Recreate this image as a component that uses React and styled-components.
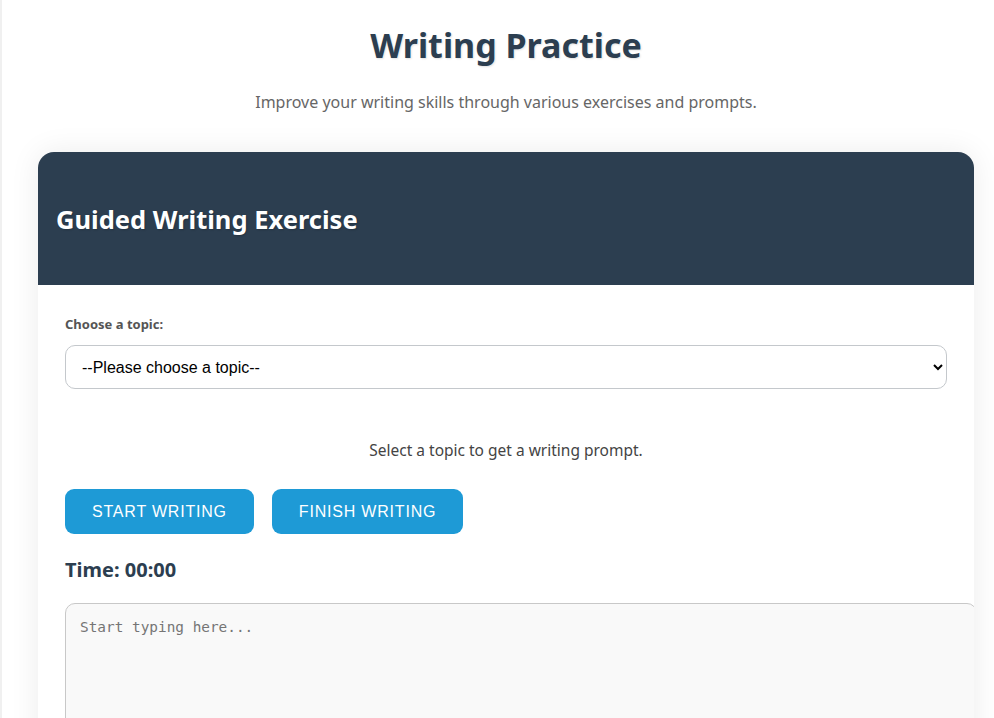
import React, { useState } from "react";
import styled, { createGlobalStyle } from "styled-components";

const GlobalStyle = createGlobalStyle`
  html, body {
    margin: 0;
    padding: 0;
    background: #ffffff;
  }
  body {
    font-family: "Segoe UI", "Noto Sans", sans-serif;
    color: #333333;
  }
  * {
    box-sizing: border-box;
  }
`;

const topics = ["Travel", "Technology", "Family", "Environment", "Education"];

const App = () => {
  const [topic, setTopic] = useState("");
  const [text, setText] = useState("");

  return (
    <Page>
      <GlobalStyle />
      <Title>Writing Practice</Title>
      <Subtitle>Improve your writing skills through various exercises and prompts.</Subtitle>

      <Card>
        <CardHeader>
          <h2>Guided Writing Exercise</h2>
        </CardHeader>
        <CardBody>
          <Label htmlFor="topic">Choose a topic:</Label>
          <Select id="topic" value={topic} onChange={(e) => setTopic(e.target.value)}>
            <option value="">--Please choose a topic--</option>
            {topics.map((t) => (
              <option key={t} value={t}>{t}</option>
            ))}
          </Select>

          <Prompt>
            {topic ? `Write about ${topic.toLowerCase()}.` : "Select a topic to get a writing prompt."}
          </Prompt>

          <ButtonRow>
            <ActionButton>Start Writing</ActionButton>
            <ActionButton>Finish Writing</ActionButton>
          </ButtonRow>

          <Timer>Time: 00:00</Timer>

          <TextArea
            placeholder="Start typing here..."
            value={text}
            onChange={(e) => setText(e.target.value)}
          />
        </CardBody>
      </Card>
    </Page>
  );
};

export default App;

const Page = styled.div`
  min-height: 718px;
  border-left: 2px solid #f0f0f0;
  padding: 0 20px 40px 36px;
`;

const Title = styled.h1`
  margin: 0;
  padding-top: 22px;
  text-align: center;
  font-size: 34px;
  line-height: 46px;
  font-weight: 700;
  color: #2c3e50;
  text-shadow: 1px 1px 2px rgba(0, 0, 0, 0.12);
`;

const Subtitle = styled.p`
  margin: 23px 0 0;
  text-align: center;
  font-size: 16px;
  line-height: 22px;
  color: #666666;
`;

const Card = styled.div`
  margin-top: 39px;
  background: #ffffff;
  border-radius: 16px;
  overflow: hidden;
  box-shadow: 0 0 30px rgba(0, 0, 0, 0.08);
`;

const CardHeader = styled.div`
  height: 133px;
  background: #2c3e50;
  display: flex;
  align-items: center;
  padding: 0 18px;

  h2 {
    margin: 0;
    font-size: 25.5px;
    font-weight: 700;
    color: #ffffff;
    text-shadow: 1px 1px 2px rgba(0, 0, 0, 0.2);
  }
`;

const CardBody = styled.div`
  padding: 30px 27px 30px;
`;

const Label = styled.label`
  display: block;
  font-size: 13px;
  line-height: 18px;
  font-weight: 700;
  color: #555555;
`;

const Select = styled.select`
  display: block;
  width: 100%;
  height: 44px;
  margin-top: 12px;
  padding: 0 12px;
  font-family: "Liberation Sans", Arial, sans-serif;
  font-size: 16px;
  color: #000000;
  background: #ffffff;
  border: 1px solid #c4c8cc;
  border-radius: 10px;
`;

const Prompt = styled.p`
  margin: 50px 0 0;
  text-align: center;
  font-size: 15.5px;
  line-height: 22px;
  color: #444444;
`;

const ButtonRow = styled.div`
  display: flex;
  gap: 18px;
  margin-top: 28px;
`;

const ActionButton = styled.button`
  height: 45px;
  padding: 0 27px;
  border: none;
  border-radius: 9px;
  background: #1e9ad6;
  color: #ffffff;
  font-family: "Liberation Sans", Arial, sans-serif;
  font-size: 16px;
  letter-spacing: 0.8px;
  text-transform: uppercase;

  &:hover {
    cursor: pointer;
    background: #1787bd;
  }
`;

const Timer = styled.h3`
  margin: 23px 0 0;
  font-size: 20px;
  line-height: 26px;
  font-weight: 700;
  color: #2c3e50;
`;

const TextArea = styled.textarea`
  display: block;
  box-sizing: content-box;
  width: 100%;
  height: 200px;
  margin-top: 20px;
  padding: 15px 14px;
  background: #f9f9f9;
  border: 1px solid #c8c8c8;
  border-radius: 10px;
  font-family: "DejaVu Sans Mono", "Liberation Mono", monospace;
  font-size: 14.4px;
  color: #333333;
  resize: vertical;

  &::placeholder {
    color: #757575;
  }
`;
